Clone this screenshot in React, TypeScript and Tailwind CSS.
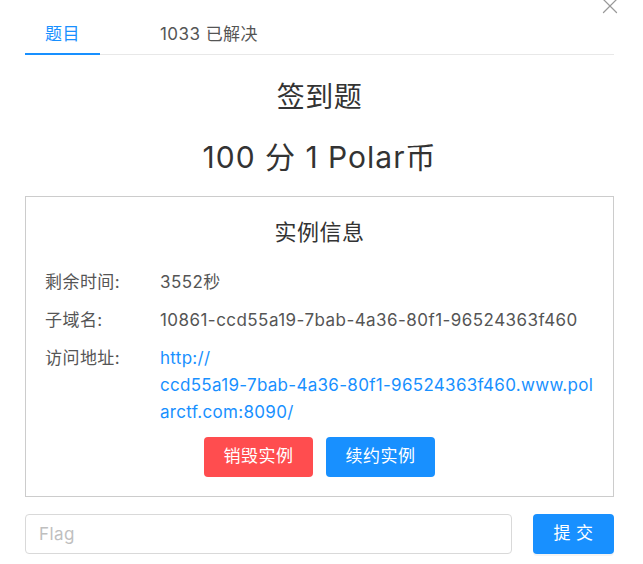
import { X } from 'lucide-react'

const font = { fontFamily: 'Inter, "Noto Sans CJK SC", sans-serif' }

const rows = [
  { label: '剩余时间:', value: '3552秒' },
  { label: '子域名:', value: '10861-ccd55a19-7bab-4a36-80f1-96524363f460' },
]

// the address wraps at fixed points in the box
const urlLines = ['http://', 'ccd55a19-7bab-4a36-80f1-96524363f460.www.pol', 'arctf.com:8090/']

export default function App() {
  return (
    <div className="relative h-[564px] w-[643px] overflow-hidden bg-white text-[#333] tracking-[0.45px]" style={font}>
      <button className="absolute right-[20px] top-[-7px] text-[#999]">
        <X size={26} strokeWidth={1.15} />
      </button>

      <div className="pl-[25px] pr-[29px] pt-[15px]">
        {/* tabs */}
        <div className="flex h-[40px] border-b border-[#e8e8e8] text-[17px]">
          <div className="relative flex w-[75px] items-center justify-center text-[#1890ff]">
            题目
            <span className="absolute bottom-[-1px] left-0 h-[2px] w-full bg-[#1890ff]" />
          </div>
          <div className="ml-[60px] flex items-center text-[#555]">1033 已解决</div>
        </div>

        <h1 className="mt-[24px] text-center text-[28px] leading-[36px] text-[#333]">签到题</h1>
        <div className="mt-[22px] text-center text-[30px] leading-[40px] tracking-[1px] text-[#333]">100 分 1 Polar币</div>

        {/* instance info */}
        <div className="mt-[19px] h-[301px] border border-[#ccc] px-[19px] pt-[19px]">
          <div className="text-center text-[22px] leading-[32px] text-[#333]">实例信息</div>
          <div className="mt-[21px] flex flex-col gap-[11px] text-[17px] leading-[27px]">
            {rows.map((r) => (
              <div key={r.label} className="flex">
                <div className="w-[115px] shrink-0 text-[#555]">{r.label}</div>
                <div className="whitespace-nowrap text-[#555]">{r.value}</div>
              </div>
            ))}
            <div className="flex">
              <div className="w-[115px] shrink-0 text-[#555]">访问地址:</div>
              <a className="flex flex-col whitespace-nowrap tracking-[0.3px] text-[#1890ff]">
                {urlLines.map((l) => (
                  <span key={l}>{l}</span>
                ))}
              </a>
            </div>
          </div>
          <div className="mt-[11px] flex justify-center gap-[13px]">
            <button className="h-[40px] w-[109px] rounded-[4px] bg-[#ff4d4f] text-[17px] text-white">销毁实例</button>
            <button className="h-[40px] w-[109px] rounded-[4px] bg-[#1890ff] text-[17px] text-white">续约实例</button>
          </div>
        </div>

        {/* flag submit */}
        <div className="mt-[17px] flex items-center gap-[21px]">
          <input
            placeholder="Flag"
            className="h-[40px] min-w-0 flex-1 rounded-[4px] border border-[#d9d9d9] px-[13px] text-[17px] outline-none placeholder:text-[#bfbfbf]"
          />
          <button className="h-[40px] w-[81px] shrink-0 rounded-[4px] bg-[#1890ff] text-[17px] text-white shadow-[0_2px_0_rgba(0,0,0,0.045)]">
            提 交
          </button>
        </div>
      </div>
    </div>
  )
}
